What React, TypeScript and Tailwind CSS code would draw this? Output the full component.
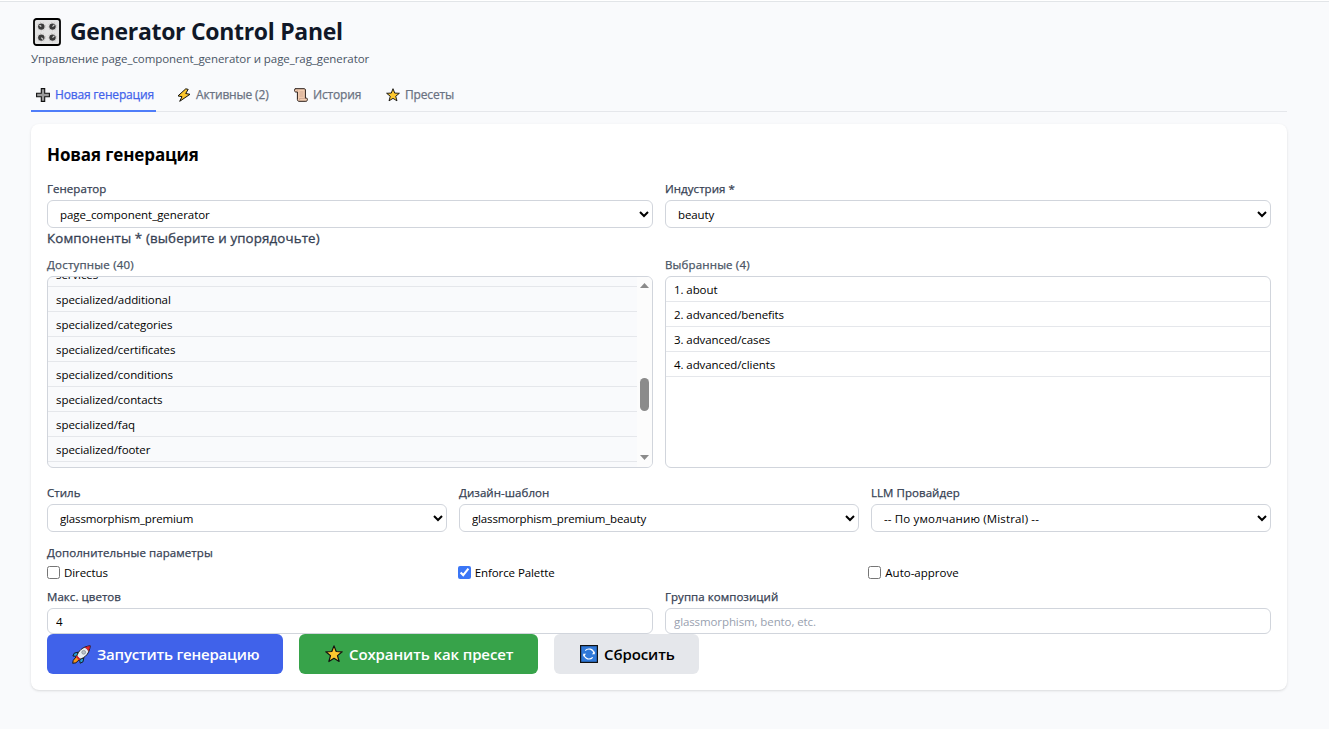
import { useState } from 'react';
import type { ReactNode } from 'react';

const available = [
  'services',
  'specialized/additional',
  'specialized/categories',
  'specialized/certificates',
  'specialized/conditions',
  'specialized/contacts',
  'specialized/faq',
  'specialized/footer',
];

const selected = ['about', 'advanced/benefits', 'advanced/cases', 'advanced/clients'];

function KnobsIcon() {
  const knobs = [
    [8.3, 8.6],
    [19.5, 8.6],
    [8.3, 19.6],
    [19.5, 19.6],
  ];
  return (
    <svg className="h-7 w-7 shrink-0" viewBox="0 0 28 28">
      <rect x="1" y="1" width="26" height="26" rx="2.5" fill="#e3e3e3" stroke="#000" strokeWidth="1.8" />
      {knobs.map(([x, y], i) => (
        <g key={i}>
          <circle cx={x} cy={y} r="4.2" fill="none" stroke="#c4bdbb" strokeWidth="1" strokeDasharray="1 2" />
          <circle cx={x} cy={y} r="3.2" fill="#3a3a3a" />
          <path
            d={i % 2 ? `M${x} ${y}l2-2` : i ? `M${x} ${y}l2 2` : `M${x} ${y}l-1.8-1.4`}
            stroke="#d6d6d6"
            strokeWidth="1.3"
          />
        </g>
      ))}
    </svg>
  );
}

function PlusIcon() {
  return (
    <svg className="h-3.5 w-3.5 shrink-0" viewBox="0 0 14 14">
      <path d="M5.3.6h3.4v4.7h4.7v3.4H8.7v4.7H5.3V8.7H.6V5.3h4.7z" fill="#9b9b9b" stroke="#111" strokeWidth="1.1" />
    </svg>
  );
}

function BoltIcon() {
  return (
    <svg className="h-3.5 w-3.5 shrink-0" viewBox="0 0 14 14">
      <path d="M8.8.8 1 7.9l4 .8-2.3 4.6L13 6.3 8.7 5.5l2.5-4.1z" fill="#fcc62d" stroke="#111" strokeWidth="1" strokeLinejoin="round" />
    </svg>
  );
}

function ScrollIcon() {
  return (
    <svg className="h-3.5 w-3.5 shrink-0" viewBox="0 0 14 14">
      <path
        d="M1 .7h9.3c.8 0 1.1.6 1.1 1.3v8.2h1.1c.7 0 .9.4.9 1.2 0 1.2-.5 1.9-1.5 1.9H5c-1 0-1.6-.7-1.6-1.7V4H1.8C1 4 .5 3.3.5 2.4z"
        fill="#f3cdb1"
        stroke="#2a1d18"
        strokeWidth="1"
        strokeLinejoin="round"
      />
      <path d="M3.4 4V2.2M11.2 10.4H5.6v1.8M5.5 4h4M5.5 6h4M5.5 8h4" fill="none" stroke="#c09a85" strokeWidth=".7" />
    </svg>
  );
}

function StarIcon({ className }: { className: string }) {
  return (
    <svg className={className} viewBox="0 0 18 18">
      <path
        d="m9 .9 2.200 5.600 6 .3-4.700 3.800 1.600 5.900L9 13.300l-5.100 3.200 1.600-5.900L.8 6.800l6-.3z"
        fill="#fdc82f"
        stroke="#111"
        strokeWidth="1.2"
        strokeLinejoin="round"
      />
    </svg>
  );
}

function RocketIcon() {
  return (
    <svg className="h-[19px] w-[19px] shrink-0" viewBox="0 0 19 19">
      <path d="M4.6 11.2 1.2 15.4.7 18.3l3.2-.5 4-3.7z" fill="#f7941d" stroke="#111" strokeWidth=".9" />
      <path d="m6.2 7.2-3.9.9L.9 11l4 .4zM11.8 12.8l-.8 4-2.8 1.400-.7-4z" fill="#2ba3dc" stroke="#111" strokeWidth=".9" strokeLinejoin="round" />
      <path d="M4.7 11.3C6.3 6 10.5 1.5 18.2.8c-.6 7.5-5 12-10.5 13.5z" fill="#e8eef2" stroke="#111" strokeWidth=".9" strokeLinejoin="round" />
      <path d="M12.8 2.4 18.2.8l-1.6 5.500c-.9-1.8-2-3-3.8-3.9z" fill="#e5222f" stroke="#7c1018" strokeWidth=".5" />
      <circle cx="11.7" cy="7.300" r="1.9" fill="#b9c1c8" stroke="#7f8990" strokeWidth=".7" />
      <path d="m4.3 11.2 3.5 3.5" stroke="#d4202c" strokeWidth="1.7" />
    </svg>
  );
}

function RefreshIcon() {
  return (
    <svg className="h-[18px] w-[18px] shrink-0" viewBox="0 0 18 18">
      <rect x=".6" y=".6" width="16.8" height="16.8" fill="#2f78d8" stroke="#111" strokeWidth="1.2" />
      <path d="M5.300 5.600A5 5 0 0 1 13.900 8M12.700 12.400A5 5 0 0 1 4.100 10" fill="none" stroke="#fff" strokeWidth="1.1" />
      <path d="M14.800 6.200v3h-3zM3.200 11.800v-3h3z" fill="#fff" />
    </svg>
  );
}

function Tab({ icon, label, active, onClick }: { icon: ReactNode; label: ReactNode; active: boolean; onClick: () => void }) {
  return (
    <button
      onClick={onClick}
      className={`-mb-px flex h-[34px] shrink-0 items-center gap-[5px] border-b-2 pt-[2px] whitespace-nowrap text-[12px] tracking-[-0.17px] [-webkit-text-stroke:0.25px] ${
        active ? 'border-[#4f7df9] text-[#4263eb]' : 'border-transparent text-gray-500'
      }`}
    >
      {icon}
      {label}
    </button>
  );
}

function Field({ label, children }: { label: ReactNode; children: ReactNode }) {
  return (
    <div>
      <label className="flex h-[23px] items-center whitespace-nowrap text-[11.5px] tracking-[0.05px] text-gray-700 [-webkit-text-stroke:0.25px]">{label}</label>
      {children}
    </div>
  );
}

function Select({ value, className }: { value: string; className: string }) {
  return (
    <select defaultValue={value} className={`block h-7 w-full rounded-md border border-gray-300 bg-white px-2 text-[11.5px] text-black ${className}`}>
      <option>{value}</option>
    </select>
  );
}

export default function App() {
  const [tab, setTab] = useState('new');
  const [directus, setDirectus] = useState(false);
  const [palette, setPalette] = useState(true);
  const [approve, setApprove] = useState(false);

  return (
    <div className="h-[729px] w-[1329px] overflow-hidden border-t border-white bg-[#f9fafc] font-['Open_Sans',sans-serif] text-black">
      <div className="h-px bg-[#e2e5e8]" />
      <div className="ml-[31px] w-[1256px]">
        {/* Header */}
        <header className="pt-[15px]">
          <h1 className="ml-[2px] flex h-[29px] items-center gap-[9px] whitespace-nowrap text-[23px] font-bold tracking-[-0.3px] text-gray-900">
            <KnobsIcon />
            <span>Generator Control Panel</span>
          </h1>
          <p className="flex h-6 items-center pt-[2px] whitespace-nowrap text-[11.5px] tracking-[-0.07px] text-gray-600">
            <span>Управление page_component_generator и page_rag_generator</span>
          </p>
        </header>

        {/* Tabs */}
        <nav className="mt-[8px] flex h-[34px] border-b border-gray-200">
          <div className="w-[125px] [&>button]:w-full [&>button]:pl-[5px]">
            <Tab icon={<PlusIcon />} label={<span>Новая генерация</span>} active={tab === 'new'} onClick={() => setTab('new')} />
          </div>
          <div className="ml-[21px] w-[117px]">
            <Tab icon={<BoltIcon />} label={<span>Активные (2)</span>} active={tab === 'active'} onClick={() => setTab('active')} />
          </div>
          <div className="w-[92px]">
            <Tab icon={<ScrollIcon />} label={<span>История</span>} active={tab === 'history'} onClick={() => setTab('history')} />
          </div>
          <Tab icon={<StarIcon className="h-3.5 w-3.5 shrink-0" />} label={<span>Пресеты</span>} active={tab === 'presets'} onClick={() => setTab('presets')} />
        </nav>

        {/* Generation form */}
        <main className="mt-3 h-[566px] rounded-lg bg-white px-4 pt-[18px] shadow-sm">
          <h2 className="flex h-[25px] items-center whitespace-nowrap text-[17px] font-bold tracking-[-0.12px]">
            <span>Новая генерация</span>
          </h2>

          <div className="mt-[10px] grid grid-cols-2 gap-3">
            <Field label={<span>Генератор</span>}>
              <Select value="page_component_generator" className="tracking-[-0.05px]" />
            </Field>
            <Field label={<span>Индустрия *</span>}>
              <Select value="beauty" className="tracking-[-0.1px]" />
            </Field>
          </div>

          <h3 className="flex h-[21px] items-center whitespace-nowrap text-[13.3px] tracking-[0.14px] text-gray-700 [-webkit-text-stroke:0.3px]">
            <span>Компоненты * (выберите и упорядочьте)</span>
          </h3>

          <div className="mt-[5px] grid grid-cols-2 gap-3">
            <div>
              <div className="flex h-[22px] items-center whitespace-nowrap text-[11.5px] tracking-[0.2px] text-gray-600 [-webkit-text-stroke:0.25px]">
                <span>Доступные (40)</span>
              </div>
              <div className="flex h-[192px] overflow-hidden rounded-md border border-gray-300 bg-[#f9fafc]">
                <ul className="-mt-[15px] flex-1">
                  {available.map((name) => (
                    <li key={name} className="flex h-[25px] items-center border-b border-gray-200 px-2 pt-[2px] whitespace-nowrap text-[11.5px] tracking-[-0.07px]">
                      <span>{name}</span>
                    </li>
                  ))}
                </ul>
                <div className="flex w-[15px] flex-col items-center bg-[#fcfcfc] pt-[6px] pb-[7px]">
                  <svg className="h-[5px] w-[9px]" viewBox="0 0 9 5">
                    <path d="M4.5 0 9 5H0z" fill="#8b8b8b" />
                  </svg>
                  <div className="mt-[90px] h-[33px] w-[9px] rounded-full bg-[#8b8b8b]" />
                  <svg className="mt-auto h-[5px] w-[9px]" viewBox="0 0 9 5">
                    <path d="M0 0h9L4.5 5z" fill="#8b8b8b" />
                  </svg>
                </div>
              </div>
            </div>
            <div>
              <div className="flex h-[22px] items-center whitespace-nowrap text-[11.5px] tracking-[0.15px] text-gray-600 [-webkit-text-stroke:0.25px]">
                <span>Выбранные (4)</span>
              </div>
              <ul className="h-[192px] overflow-hidden rounded-md border border-gray-300">
                {selected.map((name, i) => (
                  <li key={name} className="flex h-[25px] items-center border-b border-gray-200 px-2 pt-[2px] whitespace-nowrap text-[11.5px] tracking-[-0.09px]">
                    <span>{i + 1}. {name}</span>
                  </li>
                ))}
              </ul>
            </div>
          </div>

          <div className="mt-[13px] grid grid-cols-3 gap-3">
            <Field label={<span>Стиль</span>}>
              <Select value="glassmorphism_premium" className="tracking-[-0.15px]" />
            </Field>
            <Field label={<span>Дизайн-шаблон</span>}>
              <Select value="glassmorphism_premium_beauty" className="tracking-[-0.15px]" />
            </Field>
            <Field label={<span>LLM Провайдер</span>}>
              <Select value="-- По умолчанию (Mistral) --" className="tracking-[0.15px]" />
            </Field>
          </div>

          <div className="mt-[11px] flex h-5 items-center whitespace-nowrap text-[11.5px] tracking-[0.08px] text-gray-700 [-webkit-text-stroke:0.25px]">
            <span>Дополнительные параметры</span>
          </div>
          <div className="grid h-[19px] grid-cols-3 items-center gap-2 text-[11.5px] tracking-[-0.08px]">
            <label className="flex items-center gap-1 whitespace-nowrap">
              <input type="checkbox" className="h-[13px] w-[13px]" checked={directus} onChange={(e) => setDirectus(e.target.checked)} />
              <span>Directus</span>
            </label>
            <label className="flex items-center gap-1 whitespace-nowrap">
              <input type="checkbox" className="h-[13px] w-[13px] accent-[#3b76f6]" checked={palette} onChange={(e) => setPalette(e.target.checked)} />
              <span>Enforce Palette</span>
            </label>
            <label className="flex items-center gap-1 whitespace-nowrap tracking-normal">
              <input type="checkbox" className="h-[13px] w-[13px]" checked={approve} onChange={(e) => setApprove(e.target.checked)} />
              <span>Auto-approve</span>
            </label>
          </div>

          <div className="mt-[3px] grid grid-cols-2 gap-3">
            <Field label={<span>Макс. цветов</span>}>
              <input defaultValue="4" className="block h-[26px] w-full rounded-md border border-gray-300 px-2 text-[11.5px]" />
            </Field>
            <Field label={<span>Группа композиций</span>}>
              <input placeholder="glassmorphism, bento, etc." className="block h-[26px] w-full rounded-md border border-gray-300 px-2 text-[11.5px] tracking-[-0.1px] placeholder:text-gray-400" />
            </Field>
          </div>

          <div className="flex gap-4 text-[15px] font-semibold whitespace-nowrap">
            <button className="flex h-10 w-[236px] items-center gap-[6px] rounded-md bg-[#4062ea] pl-[25px] tracking-[-0.2px] text-white">
              <RocketIcon />
              <span>Запустить генерацию</span>
            </button>
            <button className="flex h-10 w-[239px] items-center gap-[6px] rounded-md bg-[#37a34a] pl-[26px] tracking-[-0.1px] text-white">
              <StarIcon className="h-[18px] w-[18px] shrink-0" />
              <span>Сохранить как пресет</span>
            </button>
            <button className="flex h-10 w-[145px] items-center gap-[6px] rounded-md bg-gray-200 pl-[26px] tracking-[-0.1px] text-black">
              <RefreshIcon />
              <span>Сбросить</span>
            </button>
          </div>
        </main>
      </div>
    </div>
  );
}
